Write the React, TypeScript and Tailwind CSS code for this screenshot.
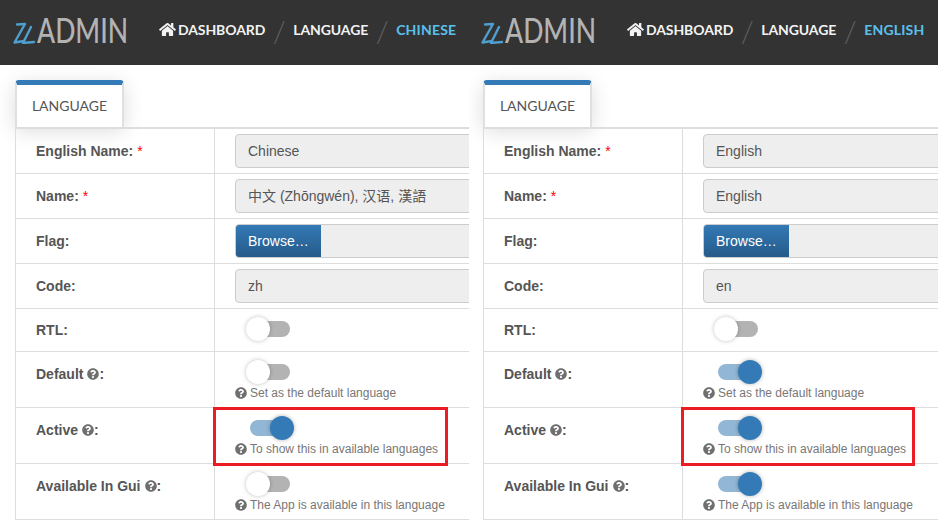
import React from "react";
import { FaHome, FaQuestionCircle } from "react-icons/fa";

const arial = "font-['Liberation_Sans','Noto_Sans_CJK_SC',sans-serif]";

function Logo() {
    return (
        <div className="flex items-center h-full w-[159px] pl-[13px] pb-[6px] shrink-0">
            <svg width="24" height="28" viewBox="0 0 24 28" fill="none" className="shrink-0">
                <path d="M4 8.5 L12 8 L1.5 26.5 L11 25" stroke="#4f9fce" strokeWidth="2.4" strokeLinejoin="round" strokeLinecap="round" />
                <path d="M18 11 L10 27 L21 26" stroke="#4f9fce" strokeWidth="2.4" strokeLinejoin="round" strokeLinecap="round" />
            </svg>
            <span className="font-['Lato',sans-serif] text-[35px] leading-none font-medium text-[#b3b3b3] origin-left scale-x-[.76] whitespace-nowrap">ADMIN</span>
        </div>
    );
}

function Crumbs({ current }: { current: string }) {
    const crumb = "font-['Lato',sans-serif] text-[14px] font-bold tracking-[-0.1px] whitespace-nowrap";
    const slash = "font-['Lato',sans-serif] text-[30px] font-light text-[#5f5f5f] w-[28px] text-center leading-none";
    return (
        <div className="flex items-center h-full pb-[6px] text-[#f2f2f2]">
            <FaHome className="w-[17px] h-[15px] mr-[2px]" />
            <span className={crumb}>DASHBOARD</span>
            <span className={slash}>/</span>
            <span className={crumb}>LANGUAGE</span>
            <span className={slash}>/</span>
            <span className={`${crumb} tracking-[0.2px] text-[#5bc0ee]`}>{current}</span>
        </div>
    );
}

function Toggle({ on }: { on?: boolean }) {
    return (
        <div className="relative ml-[11px] w-[48px] h-[24px] shrink-0">
            <div className={`absolute left-[4px] top-[4px] w-[40px] h-[16px] rounded-full ${on ? "bg-[#92b6d5]" : "bg-[#b3b3b3]"}`} />
            <div
                className={`absolute top-0 w-[24px] h-[24px] rounded-full ${
                    on ? "left-[24px] bg-[#337ab7] shadow-[0_0_4px_rgba(0,0,0,0.3)]" : "left-0 bg-white shadow-[0_0_4px_rgba(0,0,0,0.25)]"
                }`}
            />
        </div>
    );
}

function Help({ children }: { children: React.ReactNode }) {
    return (
        <div className="flex items-center h-[16px] mt-[1px] text-[12px] text-[#777] whitespace-nowrap">
            <FaQuestionCircle className="w-[12px] h-[12px] mr-[3px] text-[#6f6f6f]" />
            {children}
        </div>
    );
}

function Row({ label, required, height, children }: { label: string; required?: boolean; height: string; children: React.ReactNode }) {
    return (
        <div className={`flex border-b border-[#ddd] ${height}`}>
            <div className="flex items-center w-[199px] shrink-0 pl-[20px] border-r border-[#ddd] text-[14px] font-bold text-[#555] whitespace-nowrap">
                {label}:
                {required && <span className="ml-[4px] font-normal text-[#f00]">*</span>}
            </div>
            <div className="flex flex-col justify-center pl-[20px] flex-1">{children}</div>
        </div>
    );
}

// rows with a help line: label sits high, toggle and help stack from the top
function HelpRow({ label, text, on }: { label: string; text: string; on?: boolean }) {
    return (
        <div className="flex border-b border-[#ddd] h-[56px]">
            <div className="flex items-center w-[199px] h-[44px] shrink-0 pl-[20px] text-[14px] font-bold text-[#555] whitespace-nowrap">
                {label}
                <FaQuestionCircle className="w-[12px] h-[12px] ml-[4px] text-[#6f6f6f]" />:
            </div>
            <div className="flex flex-col pl-[20px] pt-[8px] flex-1 border-l border-[#ddd] -ml-px">
                <Toggle on={on} />
                <Help>{text}</Help>
            </div>
        </div>
    );
}

function TextBox({ value }: { value: string }) {
    return (
        <div className="flex items-center w-[320px] h-[34px] px-[12px] bg-[#eee] border border-[#ccc] rounded-[4px] text-[14px] text-[#555] whitespace-nowrap">
            {value}
        </div>
    );
}

function FileBox() {
    return (
        <div className="flex w-[320px] h-[34px] bg-[#eee] border border-[#ccc] rounded-[4px] overflow-hidden">
            <div className="flex items-center w-[86px] -m-px px-[13px] bg-gradient-to-b from-[#337ab7] to-[#265a88] text-[14px] text-white">Browse…</div>
        </div>
    );
}

function Pane({ title, english, name, code, isDefault, gui, shift, boxWidth }: {
    title: string;
    english: string;
    name: string;
    code: string;
    isDefault?: boolean;
    gui?: boolean;
    shift?: string;
    boxWidth: string;
}) {
    return (
        <div className={`w-[469px] h-full overflow-hidden ${arial}`}>
            <div className={`relative w-[480px] h-full ${shift ?? ""}`}>
                <header className="flex h-[65px] bg-[#333]">
                    <Logo />
                    <Crumbs current={title} />
                </header>

                <div className="pl-[15px] pt-[15px]">
                    <div className="w-[109px] h-[47px] pb-[1px] flex items-center justify-center bg-white border-x-2 border-t-[5px] border-x-[#e0e0e0] border-t-[#337ab7] rounded-t-[4px] shadow-[0_4px_20px_rgba(0,0,0,0.14)] font-['Lato',sans-serif] text-[14px] text-[#555]">
                        LANGUAGE
                    </div>
                    <div className="relative border-t-2 border-l border-[#ddd]">
                        <Row label="English Name" required height="h-[45px]"><TextBox value={english} /></Row>
                        <Row label="Name" required height="h-[45px]"><TextBox value={name} /></Row>
                        <Row label="Flag" height="h-[45px]"><FileBox /></Row>
                        <Row label="Code" height="h-[45px]"><TextBox value={code} /></Row>
                        <Row label="RTL" height="h-[43px]"><div className="pb-[2px]"><Toggle /></div></Row>
                        <HelpRow label="Default" text="Set as the default language" on={isDefault} />
                        <HelpRow label="Active" text="To show this in available languages" on />
                        <HelpRow label="Available In Gui" text="The App is available in this language" on={gui} />
                    </div>
                </div>

                {/* annotation on top of the screenshot */}
                <div className={`absolute left-[213px] top-[407px] h-[59px] border-[3px] border-[#ed1c24] ${boxWidth}`} />
            </div>
        </div>
    );
}

export default function App() {
    return (
        <div className="flex w-[938px] h-[529px] bg-white overflow-hidden">
            <Pane title="CHINESE" english="Chinese" name="中文 (Zhōngwén), 汉语, 漢語" code="zh" boxWidth="w-[235px]" />
            <Pane title="ENGLISH" english="English" name="English" code="en" isDefault gui shift="-ml-px" boxWidth="w-[234px]" />
        </div>
    );
}
